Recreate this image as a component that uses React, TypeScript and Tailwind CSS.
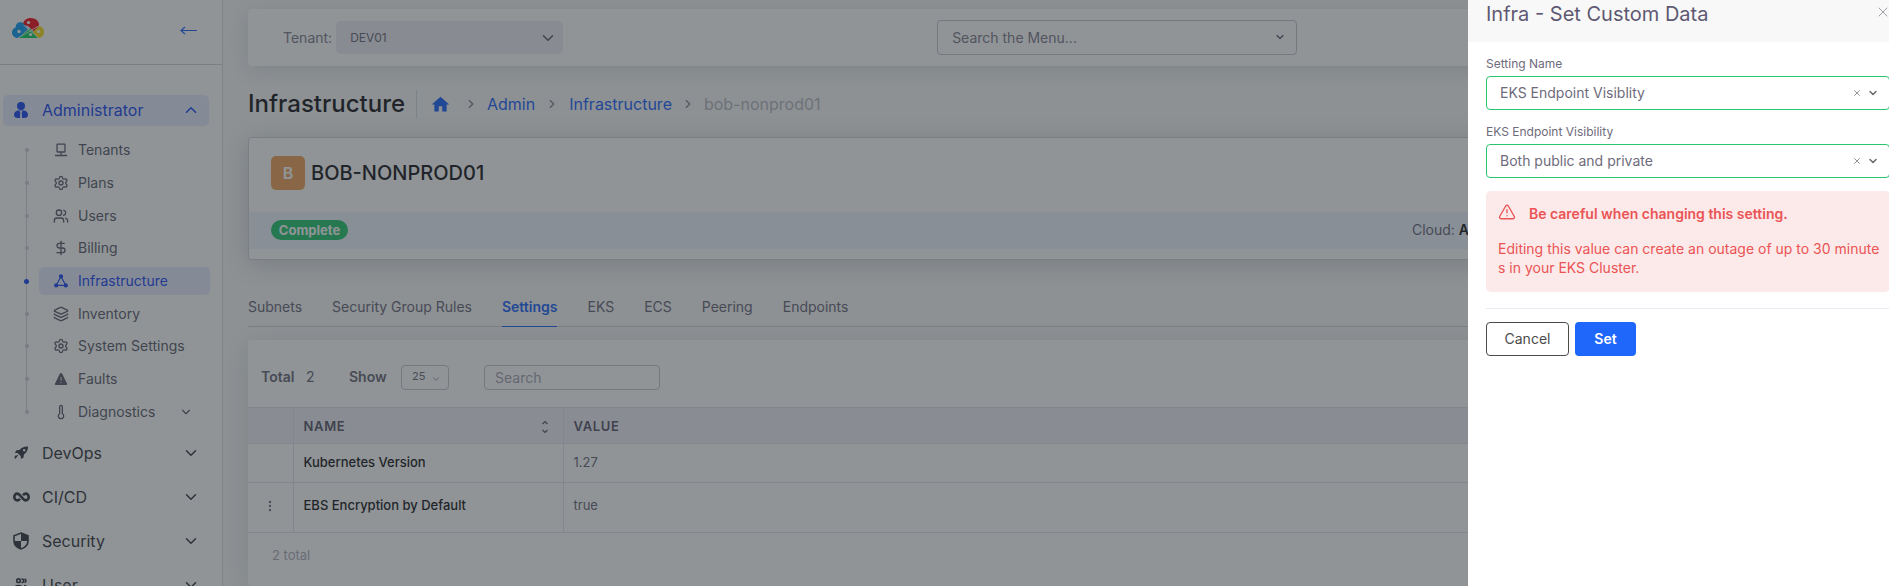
import type { ReactNode } from 'react';
import {
  AlertTriangle,
  ChevronDown,
  ChevronRight,
  ChevronUp,
  DollarSign,
  Layers,
  MoreVertical,
  Settings,
  Thermometer,
  Users,
  X,
} from 'lucide-react';
import { MdHome } from 'react-icons/md';

function Logo() {
  return (
    <svg width="32" height="20" viewBox="0 0 32 20" aria-hidden="true">
      <path d="M11 7.500 C10.500 2.500 14.500 0 19 0 C24 0 27.800 3.500 27 8.500 L22 13.500 L15.500 7.800 Z" fill="#f5141e" />
      <path d="M6.500 20 C3 20 0 18 0 14.500 C0 12 1.500 10 3.800 9.200 C3.600 6 6 4 9 4.200 C10.500 4.400 12 5.500 12.800 7 L16.500 10.500 L7.200 19.500 Z" fill="#149cf0" />
      <path d="M6.500 20 L18 10.200 L26 20 Z" fill="#12d060" />
      <path d="M21 14 L27 8 C30 8.500 32 11 32 14 C32 17.500 29.500 20 26 20 Z" fill="#fbdc1e" />
      <path d="M11.500 7 L26.500 20 M6 20 L27.500 7.500" stroke="#fff" strokeWidth="0.800" />
      <circle cx="16.500" cy="4.500" r="1.600" fill="#fff" />
      <circle cx="7" cy="13.500" r="1.700" fill="#fff" />
      <circle cx="18.500" cy="16.500" r="1.600" fill="#fff" />
      <circle cx="26.500" cy="13.500" r="1.600" fill="#fff" />
    </svg>
  );
}

const AdminIcon = () => (
  <svg width="14" height="16" viewBox="0 0 14 16" fill="currentColor" aria-hidden="true">
    <circle cx="7" cy="4" r="4" />
    <path d="M4 8.500 C1.500 9 0 10.800 0 12.800 C0 15 1.500 16 3.500 16 H6 L6.300 10.500 L5.500 9 H8.500 L7.700 10.500 L8 16 H10.500 C12.500 16 14 15 14 12.800 C14 10.800 12.500 9 10 8.500 Z" />
  </svg>
);

const TenantIcon = () => (
  <svg width="14" height="14" viewBox="0 0 14 14" fill="none" stroke="currentColor" strokeWidth="1.300" aria-hidden="true">
    <rect x="3" y="1.200" width="8" height="7.800" rx="0.500" />
    <path d="M7 9v3.500M1 12.500h4.500M8.500 12.500H13M5 12.500h4" />
  </svg>
);

const NodesIcon = () => (
  <svg width="14" height="14" viewBox="0 0 14 14" fill="currentColor" stroke="currentColor" strokeWidth="1.200" aria-hidden="true">
    <circle cx="7" cy="2.400" r="1.500" />
    <circle cx="2.200" cy="11.400" r="1.500" />
    <circle cx="11.800" cy="11.400" r="1.500" />
    <path d="M6.200 4 3 10M7.800 4 11 10M4 11.400h6" fill="none" />
  </svg>
);

const FaultIcon = () => (
  <svg width="14" height="14" viewBox="0 0 14 14" aria-hidden="true">
    <path d="M7 1 C7.600 1 8 1.400 8.300 2 L13 11.500 C13.400 12.400 13 13 12 13 H2 C1 13 .6 12.400 1 11.500 L5.700 2 C6 1.400 6.400 1 7 1 Z" fill="currentColor" />
    <path d="M7 5v3.800M7 10v1.200" stroke="#fff" strokeWidth="0.800" />
  </svg>
);

const RocketIcon = () => (
  <svg width="14" height="14" viewBox="0 0 14 14" fill="currentColor" aria-hidden="true">
    <path
      fillRule="evenodd"
      d="M14 .4 C10 .2 7.500 1.500 5.500 4 L2.500 4.300 L.8 7 L3.600 7 L6.800 10.300 L6.900 13 L9.500 11.400 L9.900 8.500 C12.600 6.500 14 4 14 .4 Z M10.200 2.900 a1.300 1.300 0 1 1 -.01 0 Z"
    />
    <path d="M3.800 9 L1 12.500 M2.300 9.700 L.6 11.600" stroke="currentColor" strokeWidth="1.100" />
  </svg>
);

const InfinityIcon = () => (
  <svg width="17" height="10" viewBox="0 0 17 10" fill="none" stroke="currentColor" strokeWidth="2.600" aria-hidden="true">
    <path d="M10 3.300 C11 2 12 1.600 12.800 1.600 a2.900 3.400 0 0 1 0 6.800 C11.300 8.400 10.300 7.300 8.500 5 C6.700 2.700 5.700 1.600 4.200 1.600 a2.900 3.400 0 0 0 0 6.800 C5 8.400 6 8 7 6.700" />
  </svg>
);

const ShieldIcon = () => (
  <svg width="16" height="18" viewBox="0 0 16 18" aria-hidden="true">
    <path d="M8 1 L15 3.700 V8.500 C15 12.500 12 15.800 8 17 C4 15.800 1 12.500 1 8.500 V3.700 Z" fill="none" stroke="currentColor" strokeWidth="1.600" />
    <path d="M8 1 L15 3.700 V9 H8 Z M8 9 V17 C4 15.800 1 12.500 1 9 Z" fill="currentColor" />
  </svg>
);

const PeopleIcon = () => (
  <svg width="14" height="14" viewBox="0 0 14 14" fill="none" stroke="currentColor" strokeWidth="1.600" aria-hidden="true">
    <circle cx="4.500" cy="2.700" r="1.800" />
    <path d="M7.500 1 h.8 a1.800 1.800 0 0 1 0 3.500 h-.8 M10.500 1 a1.800 1.800 0 0 1 0 3.500 M1 13 V10 C1 8.500 2.500 7.500 4.500 7.500 S8 8.500 8 10 V13 Z M10 7.500 C12 7.700 13 8.800 13 10 V13" />
  </svg>
);

type SubItem = { label: string; icon: ReactNode; active?: boolean; more?: boolean };

const subItems: SubItem[] = [
  { label: 'Tenants', icon: <TenantIcon /> },
  { label: 'Plans', icon: <Settings size={16} /> },
  { label: 'Users', icon: <Users size={16} /> },
  { label: 'Billing', icon: <DollarSign size={16} /> },
  { label: 'Infrastructure', icon: <NodesIcon />, active: true },
  { label: 'Inventory', icon: <Layers size={16} /> },
  { label: 'System Settings', icon: <Settings size={16} /> },
  { label: 'Faults', icon: <FaultIcon /> },
  { label: 'Diagnostics', icon: <Thermometer size={16} />, more: true },
];

const groups = [
  { label: 'DevOps', icon: <RocketIcon /> },
  { label: 'CI/CD', icon: <InfinityIcon /> },
  { label: 'Security', icon: <ShieldIcon /> },
  { label: 'User', icon: <PeopleIcon /> },
];

function Sidebar() {
  return (
    <aside className="flex w-[223px] shrink-0 flex-col border-r border-[#dcdcdc] bg-white">
      <div className="flex h-[65px] shrink-0 items-start justify-between border-b border-[#d4d4d8] pt-[18px] pr-6 pl-3">
        <Logo />
        <button type="button" aria-label="Collapse menu" className="mt-1 text-[#1f66fb]">
          <svg width="18" height="16" viewBox="0 0 18 16" fill="none" stroke="currentColor" strokeWidth="1.200">
            <path d="M17 8.500H1M5 5 1 8.500 5 12" />
          </svg>
        </button>
      </div>
      <nav className="pt-[30px]">
        <button type="button" className="ml-[3px] flex h-[31px] w-[206px] items-center rounded-[5px] bg-[#e8ebff] pr-[9px] pb-[2px] pl-[11px] text-base text-[#1f4df0]">
          <AdminIcon />
          <span className="ml-[14px] flex-1 text-left">Administrator</span>
          <ChevronUp size={18} strokeWidth={2} />
        </button>
        <ul className="mt-2 grid h-[294px] grid-rows-9">
          {subItems.map((item, i) => (
            <li key={item.label} className="flex items-center">
              <span className="ml-[24px] flex w-[5px] flex-col items-center self-stretch">
                <span className={i === 0 ? 'w-px flex-1' : 'w-px flex-1 bg-[#d8d8dc]'} />
                <span className={item.active ? 'size-[5px] rounded-full bg-[#1f4df0]' : 'size-[4px] rounded-full bg-[#d0d0d6]'} />
                <span className={i === subItems.length - 1 ? 'w-px flex-1' : 'w-px flex-1 bg-[#d8d8dc]'} />
              </span>
              <a
                href="#"
                className={
                  item.active
                    ? 'ml-[10px] flex h-7 w-[171px] items-center rounded-[5px] bg-[#e8ebff] pr-[17px] pl-[14px] text-sm text-[#1f4df0]'
                    : 'ml-[10px] flex h-7 w-[171px] items-center rounded-[5px] pr-[17px] pl-[14px] text-sm text-[#625f6e]'
                }
              >
                <span className="flex w-4 justify-center">{item.icon}</span>
                <span className="ml-[9px] flex-1">{item.label}</span>
                {item.more && <ChevronDown size={14} />}
              </a>
            </li>
          ))}
        </ul>
        <div className="mt-[3px]">
          {groups.map((g) => (
            <button key={g.label} type="button" className="flex h-11 w-[209px] items-center pr-[9px] pl-3 text-base text-[#3a3a44]">
              <span className="flex w-[18px] justify-center">{g.icon}</span>
              <span className="ml-3 flex-1 text-left">{g.label}</span>
              <ChevronDown size={18} strokeWidth={2} />
            </button>
          ))}
        </div>
      </nav>
    </aside>
  );
}

function TopBar() {
  return (
    <header className="flex h-[57px] items-center rounded bg-white pl-[35px] shadow-[0_4px_20px_rgba(34,41,47,0.12)]">
      <label htmlFor="tenant" className="text-sm text-[#83808e]">
        Tenant:
      </label>
      <div className="relative ml-1 w-[227px]">
        <select id="tenant" className="h-[33px] w-full appearance-none rounded-[5px] bg-[#efeff5] px-[14px] text-xs text-[#6e6b7b]">
          <option>DEV01</option>
        </select>
        <ChevronDown size={18} className="pointer-events-none absolute top-2 right-[6px] text-[#5e5b68]" />
      </div>
      <div className="relative ml-[374px] w-[360px]">
        <input
          aria-label="Search the Menu"
          placeholder="Search the Menu..."
          className="h-[35px] w-full rounded border border-[#c8c8cc] px-[14px] text-sm placeholder:text-[#83808e]"
        />
        <ChevronDown size={12} strokeWidth={3} className="pointer-events-none absolute top-[11px] right-[11px] text-[#6e6b7b]" />
      </div>
    </header>
  );
}

function Breadcrumb() {
  return (
    <div className="mt-[22px] flex h-8 items-center">
      <h1 className="w-[169px] border-r border-[#d6dce1] text-2xl leading-7 font-medium text-[#1e1e24]">Infrastructure</h1>
      <nav aria-label="Breadcrumb" className="ml-[13px] flex items-center text-base text-[#1f66fb]">
        <a href="#" aria-label="Home">
          <MdHome size={21} />
        </a>
        <ChevronRight size={14} className="mr-[9px] ml-[13px] text-[#83808e]" />
        <a href="#">Admin</a>
        <ChevronRight size={14} className="mx-[10px] text-[#83808e]" />
        <a href="#">Infrastructure</a>
        <ChevronRight size={14} className="mx-[9px] text-[#83808e]" />
        <span className="text-[#b9b9c3]">bob-nonprod01</span>
      </nav>
    </div>
  );
}

function InfraCard() {
  return (
    <section className="mt-[17px] rounded-[3px] border border-[#d4d4d8] bg-white pb-[10px] shadow-[0_4px_24px_rgba(34,41,47,0.18)]">
      <div className="flex items-start gap-[6px] px-[22px] pt-[18px] pb-[22px]">
        <span className="flex size-[34px] items-center justify-center rounded-[5px] bg-[#f0a45c] text-base font-semibold text-white">B</span>
        <h2 className="text-xl leading-[34px] font-medium text-[#1e1e24]">BOB-NONPROD01</h2>
      </div>
      <div className="flex h-[37px] items-center bg-[#eef5ff] pb-[2px] pl-[22px]">
        <span className="w-[77px] rounded-full bg-[#28c76f] text-center text-[13px] leading-5 font-bold text-white">Complete</span>
        <p className="ml-[1064px] text-sm whitespace-nowrap text-[#6e6b7b]">
          Cloud: <strong className="font-semibold text-[#1e1e24]">AWS</strong>
        </p>
      </div>
    </section>
  );
}

const tabs = ['Subnets', 'Security Group Rules', 'Settings', 'EKS', 'ECS', 'Peering', 'Endpoints'];

function Tabs() {
  return (
    <div role="tablist" className="mt-[27px] flex h-10 gap-[30px] border-b border-[#d4d4d8] text-sm text-[#6e6b7b]">
      {tabs.map((t) => (
        <button
          key={t}
          type="button"
          role="tab"
          aria-selected={t === 'Settings'}
          className={t === 'Settings' ? '-mb-px border-b border-[#1f66fb] font-semibold text-[#1f66fb]' : ''}
        >
          {t}
        </button>
      ))}
    </div>
  );
}

function SettingsTable() {
  return (
    <section className="mt-[13px] flex-1 rounded bg-white shadow-[0_4px_24px_rgba(34,41,47,0.12)]">
      <div className="flex h-[67px] items-center pt-[7px] pl-[13px] text-sm text-[#6e6b7b]">
        <span className="w-[45px] font-semibold">Total</span>
        <span className="w-[43px]">2</span>
        <label htmlFor="show" className="w-[52px] font-semibold">
          Show
        </label>
        <div className="relative w-12">
          <select id="show" className="h-[25px] w-full appearance-none rounded border border-[#c8c8cc] px-[10px] text-[11px]">
            <option>25</option>
          </select>
          <ChevronDown size={10} strokeWidth={1.5} className="pointer-events-none absolute top-[9px] right-2" />
        </div>
        <input
          aria-label="Search"
          placeholder="Search"
          className="ml-[35px] h-[25px] w-44 rounded border border-[#c8c8cc] px-[10px] text-sm placeholder:text-[#a8a5b2]"
        />
      </div>
      <table className="w-full table-fixed border-collapse text-left text-[13px] text-[#6e6b7b]">
        <colgroup>
          <col className="w-[45px]" />
          <col className="w-[270px]" />
          <col />
        </colgroup>
        <thead>
          <tr className="h-[36px] border-y border-[#e4e4ea] bg-[#f0f0f6] tracking-wider text-[#5e5b6e]">
            <th aria-label="Actions" className="border-r border-[#e2e2ea]" />
            <th className="border-r border-[#e2e2ea] px-[10px] pt-[3px] font-semibold">
              <div className="flex items-center justify-between pr-1">
                NAME
                <svg width="8" height="14" viewBox="0 0 8 14" fill="none" stroke="currentColor" strokeWidth="1.200" aria-hidden="true">
                  <path d="M1.500 4 4 1.500 6.500 4M1.500 10 4 12.500 6.500 10" />
                </svg>
              </div>
            </th>
            <th className="px-[10px] pt-[3px] font-semibold">VALUE</th>
          </tr>
        </thead>
        <tbody>
          <tr className="h-[39px] border-b border-[#e4e4ea]">
            <td className="border-r border-[#e4e4ea]" />
            <td className="border-r border-[#e4e4ea] px-[10px] font-medium text-[#1e1e24]">Kubernetes Version</td>
            <td className="px-[10px]">1.27</td>
          </tr>
          <tr className="h-[50px] border-b border-[#e4e4ea]">
            <td className="border-r border-[#e4e4ea] pb-1">
              <button type="button" aria-label="Row actions" className="ml-[15px] block">
                <MoreVertical size={14} />
              </button>
            </td>
            <td className="border-r border-[#e4e4ea] px-[10px] pb-1 font-medium text-[#1e1e24]">EBS Encryption by Default</td>
            <td className="px-[10px] pb-1">true</td>
          </tr>
        </tbody>
      </table>
      <p className="py-3 pl-6 text-[13px] leading-5 text-[#b0aeba]">2 total</p>
    </section>
  );
}

function Field({ id, label, value }: { id: string; label: string; value: string }) {
  return (
    <div>
      <label htmlFor={id} className="block text-xs leading-4 text-[#6e6b7b]">
        {label}
      </label>
      <div className="relative mt-1">
        <select id={id} className="h-[34px] w-full appearance-none rounded border border-[#28c76f] bg-white px-[13px] text-sm text-[#6e6b7b]">
          <option>{value}</option>
        </select>
        <button type="button" aria-label={'Clear ' + label} className="absolute top-3 right-7 text-[#808080]">
          <X size={10} />
        </button>
        <ChevronDown size={12} strokeWidth={3} className="pointer-events-none absolute top-[11px] right-[11px] text-[#6a6a6a]" />
      </div>
    </div>
  );
}

function CustomDataPanel() {
  return (
    <div role="dialog" aria-label="Infra - Set Custom Data" className="fixed inset-y-0 right-0 w-[421px] overflow-hidden bg-white">
      <div className="w-[440px]">
        <div className="flex h-[42px] items-start justify-between bg-[#f8f8f8] pr-[17px] pl-[18px]">
          <h2 className="text-xl leading-7 text-[#5e5873]">Infra - Set Custom Data</h2>
          <button type="button" aria-label="Close" className="mt-1 text-[#a0a0a8]">
            <X size={16} strokeWidth={1.5} />
          </button>
        </div>
        <form className="px-[18px] pt-[14px]">
          <div className="flex flex-col gap-[14px]">
            <Field id="setting-name" label="Setting Name" value="EKS Endpoint Visiblity" />
            <Field id="visibility" label="EKS Endpoint Visibility" value="Both public and private" />
          </div>
          <div role="alert" className="mt-[13px] h-[101px] rounded-[5px] bg-[#fce9e9] pt-3 pl-3 text-sm text-[#ea5455]">
            <div className="flex items-start gap-[13px]">
              <AlertTriangle size={18} strokeWidth={1.8} />
              <strong className="leading-[21px] font-semibold">Be careful when changing this setting.</strong>
            </div>
            <p className="mt-[15px] leading-[19px] whitespace-nowrap">
              Editing this value can create an outage of up to 30 minute
              <br />s in your EKS Cluster.
            </p>
          </div>
          <div className="mt-4 flex gap-[6px] border-t border-[#ebe9f1] pt-[13px]">
            <button type="button" className="h-[34px] w-[83px] rounded border border-[#4b4b4b] text-sm text-[#4b4b4b]">
              Cancel
            </button>
            <button type="button" className="h-[34px] w-[61px] rounded bg-[#1f66fb] text-sm font-semibold text-white">
              Set
            </button>
          </div>
        </form>
      </div>
    </div>
  );
}

export default function App() {
  return (
    <div className="flex h-screen overflow-hidden bg-[#f8f8f8] font-['Inter','Noto_Sans',sans-serif]">
      <Sidebar />
      <main className="flex min-w-0 flex-1 flex-col pt-[9px] pl-[25px]">
        <TopBar />
        <Breadcrumb />
        <InfraCard />
        <Tabs />
        <SettingsTable />
      </main>
      <div className="fixed inset-0 bg-[#22292f]/50" />
      <CustomDataPanel />
    </div>
  );
}
